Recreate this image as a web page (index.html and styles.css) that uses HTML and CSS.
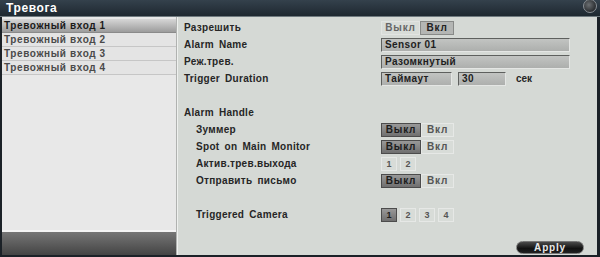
FILE: index.html
```html
<!DOCTYPE html>
<html lang="ru">
<head>
  <meta charset="UTF-8" />
  <title>Тревога</title>
  <link rel="stylesheet" href="styles.css">
</head>
<body>
  <div class="window">
    <div class="titlebar">
      <span class="title">Тревога</span>
      <span class="close-btn"></span>
    </div>
    <div class="content">
      <div class="sidebar">
        <ul class="input-list">
          <li class="selected">Тревожный вход 1</li>
          <li>Тревожный вход 2</li>
          <li>Тревожный вход 3</li>
          <li>Тревожный вход 4</li>
        </ul>
        <div class="sidebar-fill"></div>
        <div class="sidebar-footer"></div>
      </div>

      <div class="main">
        <div class="form">
          <div class="label">Разрешить</div>
          <div class="ctrl">
            <div class="toggle">
              <span class="seg off">Выкл</span><span class="seg on">Вкл</span>
            </div>
          </div>

          <div class="label">Alarm Name</div>
          <div class="ctrl"><div class="field wide">Sensor 01</div></div>

          <div class="label">Реж.трев.</div>
          <div class="ctrl"><div class="field wide">Разомкнутый</div></div>

          <div class="label">Trigger Duration</div>
          <div class="ctrl">
            <div class="field short">Таймаут</div>
            <div class="field num">30</div>
            <span class="unit">сек</span>
          </div>

          <div class="label"></div>
          <div class="ctrl"></div>

          <div class="label">Alarm Handle</div>
          <div class="ctrl"></div>

          <div class="label sub">Зуммер</div>
          <div class="ctrl">
            <div class="toggle">
              <span class="seg dark">Выкл</span><span class="seg light">Вкл</span>
            </div>
          </div>

          <div class="label sub">Spot on Main Monitor</div>
          <div class="ctrl">
            <div class="toggle">
              <span class="seg dark">Выкл</span><span class="seg light">Вкл</span>
            </div>
          </div>

          <div class="label sub">Актив.трев.выхода</div>
          <div class="ctrl">
            <div class="boxes">
              <span class="box">1</span><span class="box">2</span>
            </div>
          </div>

          <div class="label sub">Отправить письмо</div>
          <div class="ctrl">
            <div class="toggle">
              <span class="seg dark">Выкл</span><span class="seg light">Вкл</span>
            </div>
          </div>

          <div class="label"></div>
          <div class="ctrl"></div>

          <div class="label sub">Triggered Camera</div>
          <div class="ctrl">
            <div class="boxes">
              <span class="box active">1</span><span class="box">2</span><span class="box">3</span><span class="box">4</span>
            </div>
          </div>
        </div>

        <div class="actions">
          <button class="apply-btn">Apply</button>
        </div>
      </div>
    </div>
  </div>
</body>
</html>
```

FILE: styles.css
```css
body {
  margin: 0;
  background: #1b2127;
  font-family: "Liberation Sans", Arial, sans-serif;
}

.window {
  width: 600px;
  height: 257px;
  display: flex;
  flex-direction: column;
  overflow: hidden;
}

/* Title bar */
.titlebar {
  height: 16px;
  display: flex;
  align-items: center;
  padding: 0 3px 0 6px;
  background: linear-gradient(#34414c, #1e2830);
  border-bottom: 1px solid #6f7a7f;
}

.title {
  color: #fff;
  font-size: 12px;
  font-weight: bold;
  letter-spacing: 0.6px;
}

.close-btn {
  margin-left: auto;
  margin-top: -5px;
  width: 12px;
  height: 12px;
  border-radius: 50%;
  background: radial-gradient(circle at 40% 40%, #6b6f72, #2a2d30 70%);
  border: 1px solid #8a9095;
}

/* Body */
.content {
  flex: 1;
  display: flex;
  padding: 0 3px 2px 2px;
}

.sidebar {
  width: 174px;
  display: flex;
  flex-direction: column;
  background: #e8e8e8;
  border-right: 1px solid #b0b2b0;
}

.input-list {
  list-style-type: none;
  margin: 0;
  padding: 2px 0 0 0;
}

.input-list li {
  height: 13px;
  line-height: 13px;
  padding-left: 2px;
  font-size: 10px;
  font-weight: bold;
  letter-spacing: 0.6px;
  color: #4a4a4a;
  background: #e4e4e4;
  border-bottom: 1px solid #c6c6c6;
}

.input-list li.selected {
  color: #1a1a1a;
  background: linear-gradient(#d6d6d6, #9c9c9c);
  border-bottom-color: #8a8a8a;
}

.sidebar-fill {
  flex: 1;
  border-bottom: 2px solid #f4f4f4;
}

.sidebar-footer {
  height: 23px;
  background: linear-gradient(#767676, #444);
}

.main {
  flex: 1;
  display: flex;
  flex-direction: column;
  background: #d5d9d5;
  border-left: 1px solid #eef0ee;
  padding: 2px 0 0 6px;
}

.form {
  display: grid;
  grid-template-columns: 197px 1fr;
  grid-auto-rows: 17px;
}

.label {
  font-size: 10px;
  font-weight: bold;
  letter-spacing: 0.3px;
  word-spacing: 2px;
  color: #262626;
  line-height: 17px;
}

.label.sub {
  padding-left: 12px;
}

.ctrl {
  display: flex;
  align-items: center;
  font-size: 10px;
  font-weight: bold;
}

.field {
  height: 12px;
  line-height: 12px;
  padding-left: 3px;
  color: #1e1e1e;
  letter-spacing: 0.4px;
  background: linear-gradient(#c2c4c2, #adafad);
  border: 1px solid #e4e6e4;
  border-top-color: #5e605e;
  border-left-color: #5e605e;
}

.field.wide {
  width: 184px;
}

.field.short {
  width: 66px;
}

.field.num {
  width: 43px;
  margin-left: 6px;
}

.unit {
  margin-left: 10px;
  color: #262626;
}

.toggle {
  display: flex;
}

.seg {
  height: 12px;
  line-height: 12px;
  text-align: center;
  font-size: 10px;
  font-weight: bold;
  letter-spacing: 0.8px;
  border: 1px solid #e2e4e2;
}

.seg.off {
  width: 37px;
  color: #666;
  background: #d8dcd8;
}

.seg.on {
  width: 32px;
  color: #222;
  background: #b4b6b4;
  border-color: #888a88;
}

.seg.dark {
  width: 38px;
  color: #1c1c1c;
  background: linear-gradient(#999, #6f6f6f);
  border-color: #4c4c4c;
}

.seg.light {
  width: 31px;
  color: #555;
  background: #d8dcd8;
  border-color: #e6e8e6;
}

.boxes {
  display: flex;
  gap: 3px;
}

.box {
  width: 14px;
  height: 12px;
  line-height: 12px;
  text-align: center;
  font-size: 9px;
  color: #555;
  background: #d8dcd8;
  border: 1px solid #e6e8e6;
}

.box.active {
  color: #1c1c1c;
  background: linear-gradient(#999, #6f6f6f);
  border-color: #4c4c4c;
}

.actions {
  margin-top: auto;
  display: flex;
  justify-content: flex-end;
  padding: 0 13px 1px 0;
}

.apply-btn {
  width: 68px;
  height: 13px;
  padding: 0;
  border: 1px solid #777;
  border-radius: 7px;
  background: linear-gradient(#4a4a4a, #111 60%, #222);
  color: #e8e8e8;
  font-family: "Liberation Sans", Arial, sans-serif;
  font-size: 10px;
  font-weight: bold;
  letter-spacing: 0.8px;
  line-height: 11px;
}
```
